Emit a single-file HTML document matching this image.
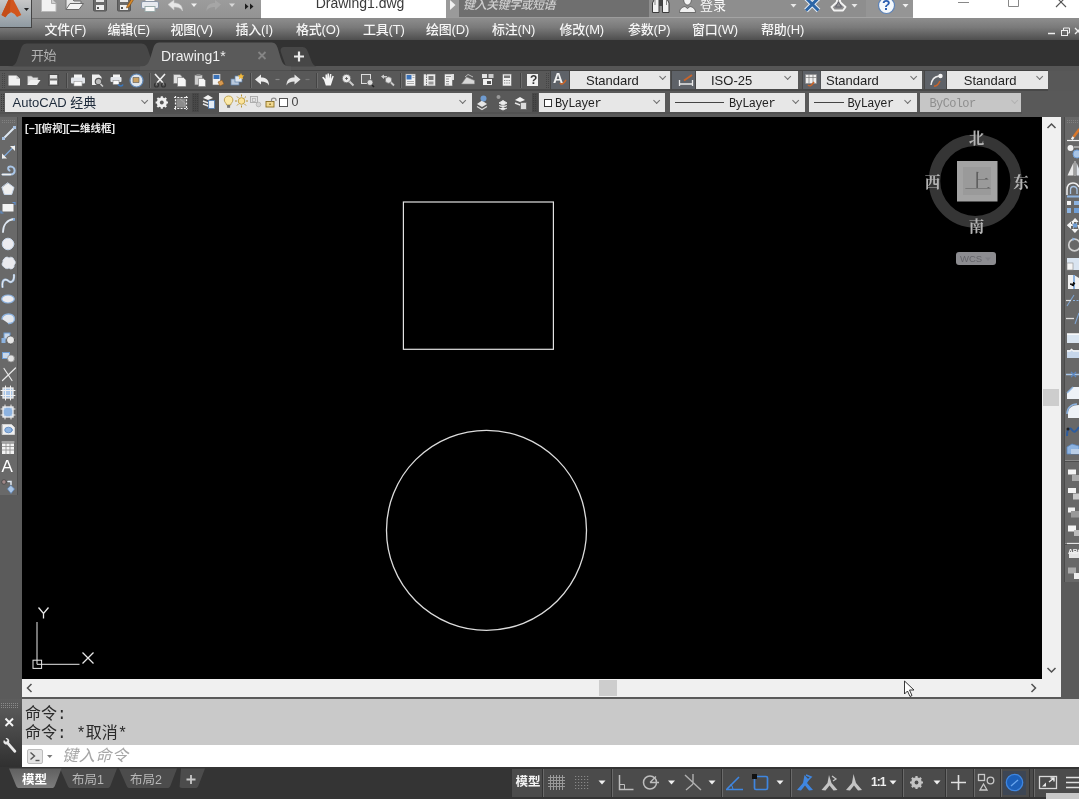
<!DOCTYPE html>
<html lang="zh-CN">
<head>
<meta charset="utf-8">
<title>Drawing1.dwg</title>
<style>
html,body{margin:0;padding:0;}
body{width:1079px;height:799px;overflow:hidden;position:relative;will-change:transform;background:#595959;font-family:"Liberation Sans","Noto Sans CJK SC",sans-serif;font-size:13px;color:#f0f0f0;}
.abs{position:absolute;}
div,span,i{box-sizing:border-box;}
/* title bar */
#title{left:0;top:0;width:1079px;height:19px;background:#8c8c8c;}
#qat{left:0;top:0;width:261px;height:19px;background:linear-gradient(#9c9c9c,#939393);border-bottom:1px solid #6e6e6e;}
#doctitle{left:261px;top:0;width:185px;height:18px;background:#fff;color:#333;font-size:14px;line-height:14px;text-align:center;}
#search{left:446px;top:0;width:203px;height:18px;background:#6f6f6f;border-bottom:1px solid #9c9c9c;}
#info{left:649px;top:0;width:264px;height:18px;background:#8e8e8e;border-bottom:1px solid #a4a4a4;overflow:hidden}
#winctl{left:913px;top:0;width:166px;height:18px;background:#fff;}
#appbtn{left:0;top:0;width:32px;height:28px;background:linear-gradient(#c8c8c8,#8f9aa2);border-right:1px solid #444;border-bottom:1px solid #444;}
/* menu */
#menu{left:0;top:19px;width:1079px;height:21px;background:linear-gradient(#8c8c8c,#7a7a7a 40%,#4e4e4e);}
#menu span{position:absolute;top:1px;font-size:13px;line-height:20px;color:#f6f6f6;white-space:nowrap;font-weight:500;letter-spacing:-.2px}
/* tabs */
#tabs{left:0;top:40px;width:1079px;height:31px;background:#323232;}
/* toolbars */
#tb1{left:0;top:71px;width:1079px;height:20px;background:#585858;}
#tb2{left:0;top:91px;width:1079px;height:26px;background:#595959;}
.combo{position:absolute;background:#e7e7e7;color:#222;height:19px;font-size:13px;line-height:19px;white-space:nowrap;overflow:hidden;}
.chev{position:absolute;top:4.650px;width:5.300px;height:5.300px;border-right:1.200px solid #707070;border-bottom:1.200px solid #707070;transform:rotate(45deg);transform-origin:50% 50%;}
#tb1 .chev{top:3.350px;}
#tb1 .combo span{margin-top:1px;}
.mono{font-family:"Liberation Mono","DejaVu Sans Mono",monospace;font-size:12px;letter-spacing:-.63px;margin-top:1.500px;}
/* main */
#ltb{left:0;top:116px;width:22px;height:583px;background:#5b5b5b;}
#draw{left:22px;top:117px;width:1020px;height:562px;background:#000;}
#vscroll{left:1042px;top:117px;width:19px;height:580px;background:#f0f0f0;}
#hscroll{left:22px;top:679px;width:1020px;height:18px;background:#f0f0f0;}
#rtb{left:1061px;top:116px;width:18px;height:583px;background:#5a5a5a;}
/* command */
#cmdhandle{left:0;top:699px;width:22px;height:68px;background:linear-gradient(#5e5e5e,#303030);}
#cmdhist{left:22px;top:699px;width:1057px;height:46px;background:#c9c9c9;color:#222;}
#cmdin{left:22px;top:745px;width:1057px;height:22px;background:#fff;}
.cmdtxt{font-family:"Liberation Mono","Noto Sans CJK SC",monospace;font-size:16px;line-height:20px;color:#2a2a2a;white-space:pre;letter-spacing:0}
.cmdtxt b{font-weight:normal;font-size:16px;letter-spacing:0}
/* status */
#status{left:0;top:767px;width:1079px;height:32px;background:#343434;}
</style>
</head>
<body>
<div id="title" class="abs"></div>
<div id="qat" class="abs">
<svg width="263" height="18" style="position:absolute;left:0;top:0">
<!-- new -->
<path d="M41.5 -1h10l4.5 4.500V11.500h-14.500z" fill="#f2f2f2" stroke="#b8b8b8"/>
<path d="M51.500 -1v4.500h4.500" fill="#d0d0d0" stroke="#aaa"/>
<!-- open -->
<path d="M66 9.500V-1h6l2 2h7v3" fill="#e8e8e8" stroke="#707070"/>
<path d="M66 9.500l4-6h13.500l-4.500 6z" fill="#f4f4f4" stroke="#6a6a6a"/>
<!-- save -->
<rect x="93.500" y="-2" width="13" height="13" rx="1" fill="#6a6a6a" stroke="#555"/>
<rect x="96" y="-2" width="8" height="4" fill="#e8e8e8"/>
<rect x="96" y="5" width="8" height="5" fill="#f0f0f0"/>
<rect x="97" y="7" width="2" height="2" fill="#555"/>
<!-- save as -->
<rect x="117.500" y="-2" width="13" height="13" rx="1" fill="#6a6a6a" stroke="#555"/>
<rect x="120" y="-2" width="8" height="4" fill="#e8e8e8"/>
<rect x="120" y="5" width="8" height="5" fill="#f0f0f0"/>
<rect x="121" y="7" width="2" height="2" fill="#555"/>
<path d="M127 6l5-8 2 1-5 8-2.500 1z" fill="#d98a2b" stroke="#7a4a10" stroke-width=".6"/>
<!-- print -->
<rect x="145" y="-2" width="10" height="5" fill="#f4f4f4" stroke="#999"/>
<rect x="141.500" y="1.500" width="17" height="7" rx="1.500" fill="#e6e9ee" stroke="#8a95a5"/>
<rect x="145" y="6.500" width="10" height="5" fill="#fafafa" stroke="#9aa"/>
<!-- undo -->
<path d="M168 4.500l6-4.500v3c5 0 8.500 2 8.500 8-1.500-3-4-4-8.500-4v3z" fill="#e6e6e6" stroke="#c8c8c8" stroke-width=".6"/>
<path d="M191 3.500h6l-3 3.500z" fill="#f0f0f0"/>
<!-- redo (dim) -->
<path d="M221 4.500l-6-4.500v3c-5 0-8.500 2-8.500 8 1.500-3 4-4 8.500-4v3z" fill="#a6a6a6"/>
<path d="M229 3.500h6l-3 3.500z" fill="#d8d8d8"/>
<!-- more -->
<path d="M245 3.500l3.500 3-3.500 3zM250 3.500l3.500 3-3.500 3z" fill="#1c1c1c"/>
</svg>
</div>
<div id="doctitle" class="abs"><span style="position:absolute;left:2px;width:183px;top:-5px;text-align:center;font-size:14px;line-height:16px;color:#3a3a3a;padding-left:11px">Drawing1.dwg</span></div>
<div id="search" class="abs">
<div class="abs" style="left:0;top:0;width:13px;height:17px;background:#9a9a9a"></div>
<svg width="12" height="18" style="position:absolute;left:0;top:0"><path d="M4 0l5.500 5-5.500 5z" fill="#f2f2f2"/></svg>
<span style="position:absolute;left:17px;top:-3px;font-size:12px;line-height:16px;font-style:italic;font-weight:500;color:#cfcfcf;white-space:nowrap;letter-spacing:-.5px">键入关键字或短语</span>
</div>
<div id="info" class="abs">
<svg width="264" height="18" style="position:absolute;left:0;top:0">
<!-- binoculars -->
<path d="M3.500 12.500V3l2-4h4.500v13.500zM13.500 12.500V-1h4.500l2 4v9.500z" fill="#f4f4f4" stroke="#3c3c3c" stroke-width="1"/>
<rect x="10" y="0" width="3.500" height="6" fill="#444"/><path d="M6 -1v6M17.500 -1v6" stroke="#888" stroke-width="1"/>
<!-- person -->
<path d="M34.500 -2c0 5 2 7 4 7s4-2 4-7z" fill="#f4f4f4" stroke="#555" stroke-width=".8"/>
<path d="M30.500 12.500c0-4 3-5.500 5.500-6l2.500 2 2.500-2c2.500.5 5.500 2 5.500 6z" fill="#f0f0f0" stroke="#555" stroke-width=".8"/>
<path d="M141.500 4h6l-3 3.500z" fill="#e8e8e8"/>
<!-- exchange X -->
<path d="M157 -2l12.500 12.500M169.500 -2l-12.500 12.500" stroke="#e4ecf6" stroke-width="5" fill="none"/>
<path d="M157 -2l12.500 12.500M169.500 -2l-12.500 12.500" stroke="#2c65a6" stroke-width="3" fill="none"/>
<!-- A360 -->
<path d="M189.500 -4l-2 6.500-5 4.500 2.500 3.500h9l2.500-3.500-5-4.500-2-6.500z" fill="none" stroke="#f2f2f2" stroke-width="1.900" stroke-linejoin="round"/>
<path d="M189.500 2l-3 5h6z" fill="none" stroke="#5a5a6a" stroke-width=".8"/>
<path d="M202.500 4h6l-3 3.500z" fill="#e8e8e8"/>
<!-- help -->
<rect x="217" y="-4" width="48" height="22" fill="#959595"/>
<circle cx="237.500" cy="5.500" r="8" fill="#f4f8fc" stroke="#5d83b8" stroke-width="1.200"/>
<path d="M253.500 4h6l-3 3.500z" fill="#f0f0f0"/>
</svg>
<span style="position:absolute;left:51px;top:-2px;font-size:13px;line-height:16px;color:#fafafa;white-space:nowrap">登录</span>
<span style="position:absolute;left:233px;top:-3px;font-size:14px;font-weight:bold;line-height:16px;color:#2a5db0">?</span>
</div>
<div id="winctl" class="abs">
<svg width="166" height="18" style="position:absolute;left:0;top:0">
<path d="M45 2.500h11" stroke="#888" stroke-width="1"/>
<path d="M95.500 -2v8.500h10v-8.500" fill="none" stroke="#888" stroke-width="1"/>
<path d="M143 -3l10 10M153 -3l-10 10" stroke="#555" stroke-width="1.100"/>
</svg></div>
<div id="menu" class="abs"><span style="left:44.5px">文件(F)</span><span style="left:107.5px">编辑(E)</span><span style="left:170.5px">视图(V)</span><span style="left:235.5px">插入(I)</span><span style="left:296px">格式(O)</span><span style="left:363px">工具(T)</span><span style="left:426px">绘图(D)</span><span style="left:492px">标注(N)</span><span style="left:559.5px">修改(M)</span><span style="left:628px">参数(P)</span><span style="left:692px">窗口(W)</span><span style="left:761px">帮助(H)</span><svg width="34" height="22" style="position:absolute;left:1045px;top:0">
<path d="M3 14.500h7" stroke="#eee" stroke-width="1.500"/>
<rect x="16.500" y="11.500" width="6" height="5" fill="none" stroke="#eee"/><path d="M18.500 11v-2h6v5h-2" fill="none" stroke="#eee"/>
<path d="M30 9l6 6M36 9l-6 6" stroke="#eee" stroke-width="1.300"/></svg></div>
<div id="appbtn" class="abs">
<svg width="31" height="27" style="position:absolute;left:0;top:0">
<path d="M8.800 -1h4.200l8.300 16-4.300 2-2.500-3-3.300-1.800-3.300 1.800-2.500 3.300-3.900-2.300z" fill="#d2561d"/>
<path d="M8.800 -1l-7.300 16 3.900 2.300 2.500-3.300 1.700-1 1.200-14z" fill="#c44d18"/>
<path d="M5 20l3-3.500 3.500-2 3.500 2 3 3.500" fill="none" stroke="#8fb0cc" stroke-width="1.500" opacity=".5"/>
<path d="M24 8h5l-2.500 3z" fill="#222"/>
</svg></div>
<div id="tabs" class="abs">
<svg width="1079" height="31" style="position:absolute;left:0;top:0">
<rect x="0" y="26" width="1079" height="5" fill="#565656"/>
<rect x="0" y="30" width="1048" height="1" fill="#424242"/>
<path d="M8 26.500c7 0 8-3 10-9l3-9c1.500-4 3-5 7-5h112c4 0 6 1 7.500 5l3 9c2 6 3 9 10 9z" fill="#474747"/>
<path d="M286 26.500l-5-14c-1-3.500 0-5.500 4-5.500h16c4 0 5.500 1 7 5l3 8c1.500 4 3 6.500 7 6.500z" fill="#474747"/>
<path d="M140 30.500v-4c7 0 8.500-3 10.500-9l3-10c1.500-4 3-5 7-5h110c4 0 5.500 1 7 5l3 10c2 6 3.500 9 10.500 9v4z" fill="#5a5a5a"/>
<path d="M258.500 12l7 7M265.500 12l-7 7" stroke="#858585" stroke-width="1.800"/>
<path d="M294 16.500h10M299 11.500v10" stroke="#ececec" stroke-width="2.200"/>
</svg>
<span style="position:absolute;left:31px;top:8px;font-size:13px;line-height:16px;color:#b2b2b2;letter-spacing:-.5px">开始</span>
<span style="position:absolute;left:161px;top:7px;font-size:14px;line-height:18px;color:#f0f0f0;">Drawing1*</span>
</div>
<div id="tb1" class="abs">
<svg width="1079" height="20" style="position:absolute;left:0;top:0">
<rect x="0" y="18" width="1048" height="2" fill="#484848"/>
<g stroke="#444" stroke-width="1"><path d="M2.500 2v15M4.500 2v15" stroke-dasharray="1 1"/><path d="M66.500 2v15M149.500 2v15M250.500 2v15M316.500 2v15M400.500 2v15M520.500 2v15"/></g>
<g stroke="#6c6c6c" stroke-width="1"><path d="M67.500 2v15M150.500 2v15M251.500 2v15M317.500 2v15M401.500 2v15M521.500 2v15"/></g>
<!-- new -->
<path d="M8.500 4.500h8l3.500 3.500v6.500h-11.500z" fill="#f0f0f0"/><path d="M16.500 4.500v3.500h3.500" fill="#c8c8c8"/>
<!-- open -->
<path d="M27.500 14v-9h4l1.500 1.500h5v2.500" fill="#dcdcdc" stroke="#8a8a8a" stroke-width=".7"/><path d="M27.500 14l3-5h10l-3.500 5z" fill="#f0f0f0"/>
<!-- save -->
<rect x="48.500" y="3.500" width="10" height="11" fill="#6c6c6c" stroke="#4c4c4c"/><rect x="50" y="4" width="7" height="3.500" fill="#e6e6e6"/><rect x="50" y="9.500" width="7" height="4" fill="#f2f2f2"/>
<!-- print -->
<rect x="74" y="3.500" width="8" height="4" fill="#f4f4f4"/><rect x="71" y="6.500" width="14" height="6" rx="1" fill="#e2e5ea"/><rect x="74" y="10.500" width="8" height="4.500" fill="#fbfbfb" stroke="#999" stroke-width=".6"/>
<!-- preview -->
<path d="M92 3.500h7l2.500 2.500v8h-9.500z" fill="#eee"/><circle cx="98.500" cy="10.500" r="3.200" fill="#bbb" stroke="#555" stroke-width="1.200"/><path d="M100.500 13l2.500 2.500" stroke="#ccc" stroke-width="1.500"/>
<!-- publish -->
<rect x="113" y="3.500" width="7" height="3.500" fill="#f4f4f4"/><rect x="110.500" y="6" width="11" height="5" rx="1" fill="#e2e5ea"/><rect x="113" y="9.500" width="6" height="4" fill="#fbfbfb" stroke="#888" stroke-width=".6"/><path d="M118 13.500c2 2 4 2 5 0" stroke="#3a78c0" stroke-width="1.600" fill="none"/>
<!-- 3dprint -->
<circle cx="136.500" cy="9.500" r="6.500" fill="#dfe6ee" stroke="#5f88b8" stroke-width="1.200"/><path d="M133 6.500h6v5h-6z" fill="#c9a063" stroke="#555" stroke-width=".6"/>
<!-- cut -->
<path d="M155 3l9 10M165 3l-9 10" stroke="#f0f0f0" stroke-width="1.600"/><circle cx="156.500" cy="14" r="2" fill="none" stroke="#333" stroke-width="1.200"/><circle cx="163.500" cy="14" r="2" fill="none" stroke="#333" stroke-width="1.200"/>
<!-- copy -->
<path d="M173.500 3.500h6.500l2 2v7h-8.500z" fill="#e0e0e0" stroke="#777" stroke-width=".6"/><path d="M177.500 6.500h6l2.500 2.500v6.500h-8.500z" fill="#f6f6f6" stroke="#777" stroke-width=".6"/>
<!-- paste -->
<rect x="194.500" y="4" width="8" height="10" fill="#cfcfcf" stroke="#666" stroke-width=".7"/><rect x="196.500" y="3" width="4" height="2" fill="#888"/><path d="M198.500 7.500h5l2 2v6h-7z" fill="#f6f6f6" stroke="#777" stroke-width=".6"/>
<!-- matchprop -->
<rect x="212.500" y="3" width="8" height="11" fill="#f2f2f2" stroke="#666" stroke-width=".6"/><rect x="213.500" y="4" width="6" height="4" fill="#3b73b9"/><path d="M218 11l4-2 2 4-4 2z" fill="#d79a52" stroke="#7a4a10" stroke-width=".5"/>
<!-- block editor -->
<rect x="231" y="8" width="8" height="6" fill="#b9c9dd" stroke="#5c7fa8" stroke-width=".7"/><rect x="235" y="5" width="7" height="6" fill="#dfe6ee" stroke="#5c7fa8" stroke-width=".7"/><path d="M241 2l1 2.200 2.300.200-1.700 1.600.5 2.300-2.100-1.200-2.100 1.200.5-2.300-1.700-1.600 2.300-.2z" fill="#f1b83a"/>
<!-- undo -->
<path d="M255 8.500l6-5v3c4 0 8 1.500 8 8-1.500-3-4-4-8-4v3z" fill="#ececec"/><path d="M275.500 8.500h4" stroke="#888" stroke-width="1.200"/>
<!-- redo -->
<path d="M300.500 8.500l-6-5v3c-4 0-8 1.500-8 8 1.500-3 4-4 8-4v3z" fill="#e4e4e4"/><path d="M305.500 8.500h4" stroke="#777" stroke-width="1.200"/>
<!-- pan -->
<path d="M324 9l-2-2.500 1.500-.8 2 2.300v-4.500h1.500v4l.5-5h1.500v5l1-4.500h1.400l-.4 5 1.500-3.300 1.300.5-2 6.300-1 3h-5z" fill="#f4f4f4"/>
<!-- zoom realtime -->
<circle cx="346.500" cy="7.500" r="4.200" fill="#e8e8e8" stroke="#777" stroke-width="1"/><path d="M345 7.500h3M346.500 6v3" stroke="#555" stroke-width=".8"/><path d="M349.500 10.500l4 4" stroke="#ccc" stroke-width="2"/>
<!-- zoom window -->
<rect x="361.500" y="3.500" width="9" height="9" fill="#666" stroke="#ddd" stroke-width="1"/><circle cx="370" cy="11.500" r="3" fill="#ddd" stroke="#555" stroke-width=".8"/><path d="M372 14l2 2" stroke="#222" stroke-width="1.600"/>
<!-- zoom prev -->
<path d="M381 5.500l3-2v1.500h3v1.500h-3v1.500z" fill="#ccc"/><circle cx="388.500" cy="9" r="3.200" fill="#e4e4e4" stroke="#777" stroke-width=".8"/><path d="M391 11.500l3 3" stroke="#ccc" stroke-width="1.800"/>
<!-- properties -->
<rect x="405.500" y="3" width="10" height="12" fill="#f2f2f2" stroke="#777" stroke-width=".6"/><rect x="406.500" y="4" width="5" height="4.500" fill="#3b73b9"/><path d="M412.500 4.500h2M412.500 6.500h2M407 10.500h7M407 12.500h7" stroke="#999" stroke-width=".8"/>
<!-- designcenter -->
<rect x="423.500" y="3" width="12" height="12" fill="#eaeaea" stroke="#666" stroke-width=".6"/><path d="M426.500 3v12" stroke="#555" stroke-width=".8" stroke-dasharray="1.500 1"/><rect x="428.500" y="5" width="5" height="4" fill="#777"/><rect x="428.500" y="10.500" width="5" height="3" fill="#999"/>
<!-- toolpalette -->
<rect x="444.500" y="3" width="8" height="12" fill="#f0f0f0" stroke="#666" stroke-width=".6"/><path d="M446 5.500h5M446 8h3M446 10.500h3M446 13h3" stroke="#777" stroke-width=".8"/><rect x="451.500" y="3" width="2.500" height="6" fill="#ddd"/>
<!-- sheetset -->
<path d="M461.500 13l5-7 8 3.500v3.500z" fill="#d8d8d8" stroke="#888" stroke-width=".6"/><path d="M465 6l3-2.500 5 2.500" fill="none" stroke="#bbb" stroke-width="1"/>
<!-- markup -->
<rect x="483" y="8" width="9" height="6" fill="#f2f2f2"/><rect x="482" y="3" width="5" height="4" fill="#e2e2e2"/><rect x="488.500" y="3" width="5" height="4" fill="#ccc"/><path d="M487 10h4v3h-4z" fill="#555"/>
<!-- calc -->
<rect x="502.500" y="3" width="9" height="12" fill="#f0f0f0" stroke="#666" stroke-width=".6"/><rect x="504" y="4.500" width="6" height="2.500" fill="#777"/><path d="M504 9.500h6M504 12h6" stroke="#888" stroke-width="1.200" stroke-dasharray="1.300 1"/>
<!-- help -->
<rect x="527" y="3" width="11" height="12" fill="#f2f2f2"/>
<!-- style icons -->
<path d="M546.500 2v15M548.500 2v15" stroke="#444" stroke-dasharray="1 1"/>
<g fill="#5e6268" stroke="#474747" stroke-width="1"><rect x="550.500" y="-.5" width="19" height="19"/><rect x="671.500" y="-.5" width="24" height="19"/><rect x="802.500" y="-.5" width="18.500" height="19"/><rect x="924.500" y="-.5" width="22" height="19"/></g>
<path d="M560 12c1.500 2 3.500 1 6-3" stroke="#c8642a" stroke-width="1.600" fill="none"/>
<path d="M679.500 9v6M692.500 9v6M679.500 13h13" stroke="#e8e8e8" stroke-width="1.300" fill="none"/><path d="M684 9.500l8-5.500" stroke="#c8642a" stroke-width="1.800"/>
<rect x="805.500" y="3.500" width="11" height="9" fill="#f0f0f0" stroke="#888" stroke-width=".6"/><path d="M805.500 6.500h11M809 3.500v9M813 3.500v9" stroke="#777" stroke-width=".7"/><path d="M808 14c2 2 4 0 6-3" stroke="#c8642a" stroke-width="1.600" fill="none"/>
<path d="M931 14c1-6 3-8 8-9" stroke="#ececec" stroke-width="1.500" fill="none"/><circle cx="940.500" cy="5" r="2.200" fill="#f4f4f4"/><path d="M934 15c2 .5 4-1 6-5" stroke="#c8642a" stroke-width="1.600" fill="none"/>
</svg>
<span class="abs" style="left:530px;top:1px;font-size:12px;font-weight:bold;line-height:16px;color:#333">?</span>
<span class="abs" style="left:553px;top:-1px;font-size:14px;font-weight:bold;line-height:16px;color:#f2f2f2">A</span>
<div class="combo" style="left:570px;top:0;width:99.500px;height:18px;line-height:18px;"><span class="abs" style="left:16px;top:0">Standard</span><i class="chev" style="left:89.650px"></i></div>
<div class="combo" style="left:695.500px;top:0;width:102px;height:18px;line-height:18px;"><span class="abs" style="left:15.500px;top:0">ISO-25</span><i class="chev" style="left:89.650px"></i></div>
<div class="combo" style="left:821px;top:0;width:101px;height:18px;line-height:18px;"><span class="abs" style="left:5px;top:0">Standard</span><i class="chev" style="left:89.650px"></i></div>
<div class="combo" style="left:947px;top:0;width:100.500px;height:18px;line-height:18px;"><span class="abs" style="left:16.750px;top:0">Standard</span><i class="chev" style="left:89.650px"></i></div>
</div>
<div id="tb2" class="abs">
<svg width="1079" height="26" style="position:absolute;left:0;top:0">
<rect x="0" y="21.500" width="1022" height="1" fill="#4c4c4c"/>
<rect x="152.500" y="2" width="66.500" height="19" fill="#515151"/><rect x="192" y="2" width="7" height="19" fill="#484848"/><rect x="532" y="2" width="6" height="19" fill="#484848"/><path d="M1.500 3v18M3.500 3v18M193.500 3v18M195.500 3v18M197.500 3v18M533.500 3v18M535.500 3v18" stroke="#3c3c3c" stroke-dasharray="1 1"/>
<!-- gear -->
<g transform="translate(161.800 11.500) scale(.88)"><circle r="4.300" fill="none" stroke="#f0f0f0" stroke-width="3"/><g stroke="#f0f0f0" stroke-width="2.400"><path d="M0 -7v14M-7 0h14M-5 -5l10 10M5 -5l-10 10"/></g><circle r="2.200" fill="#585858"/></g>
<!-- workspace -->
<rect x="176.500" y="7.500" width="9" height="9" fill="#8c8c8c"/><path d="M174 6.500h14M174 17.500h14M175.500 5v14M186.500 5v14" stroke="#f0f0f0" stroke-width="1.200" stroke-dasharray="2 1.300"/><path d="M180 8l5 4v4" stroke="#aaa" fill="none" stroke-width=".8"/>
<!-- layer props -->
<path d="M203 7l5-3 5 3-5 2z" fill="#f2f2f2"/><path d="M203 10l5 2 5-2M203 13l5 2 5-2" fill="none" stroke="#e8e8e8" stroke-width="1.400"/><rect x="208.500" y="9.500" width="6" height="8" fill="#e4ecf5" stroke="#4a78b0" stroke-width=".8"/>
<!-- layer state icons -->
<path d="M477 13l5-3.500 5 3.500-5 3z" fill="#e6e6e6"/><path d="M477 15.500l5 3 5-3" fill="none" stroke="#ddd" stroke-width="1.200"/><circle cx="483.500" cy="7.500" r="3" fill="#6f9bd0"/>
<path d="M499 12l4-2.500 4 2.500-4 2zM499 14.500l4 2 4-2M499 17l4 2 4-2" fill="#eee" stroke="#e4e4e4" stroke-width="1"/><circle cx="498.500" cy="6" r="2" fill="#9a9a9a"/>
<path d="M515 9l5-3 5 3-5 2z" fill="#f2f2f2"/><path d="M515 12l5 2 5-2" fill="none" stroke="#e8e8e8" stroke-width="1.400"/><rect x="520.500" y="11.500" width="6" height="7" fill="#ddd" stroke="#666" stroke-width=".8"/>
</svg>
<div class="combo" style="left:5px;top:2px;width:147.500px;"><span class="abs" style="left:7.500px;top:0;color:#1d2a3a">AutoCAD 经典</span><i class="chev" style="left:136.600px"></i></div>
<div class="combo" style="left:219px;top:2px;width:252.500px;">
<svg width="90" height="19" style="position:absolute;left:0;top:0">
<path d="M9.600 3c-3 0-4.300 2.200-4.300 4 0 2.200 2 3 2.300 5h4c.3-2 2.300-2.800 2.300-5 0-1.800-1.300-4-4.300-4z" fill="#fbe9a8" stroke="#b0903a" stroke-width=".8"/><rect x="8.100" y="12" width="3" height="2.800" fill="#777"/>
<circle cx="22.500" cy="8" r="3.300" fill="#fbe39a" stroke="#b8942e" stroke-width=".8"/><path d="M22.500 1.500v2M22.500 12.500v2M16 8h2M27 8h2M18 3.500l1.400 1.400M25.600 11.100l1.400 1.400M27 3.500l-1.400 1.400M19.400 11.100l-1.400 1.400" stroke="#b8942e" stroke-width="1"/>
<rect x="31.500" y="3.500" width="7" height="6" fill="#e2e2e2" stroke="#a8a8a8" stroke-width=".9"/><rect x="33.500" y="5.500" width="3" height="3" fill="none" stroke="#b0b0b0" stroke-width=".7"/><circle cx="39.500" cy="11.500" r="2.300" fill="#d4d4d4" stroke="#aaa" stroke-width=".7"/>
<rect x="47" y="8.500" width="8" height="5.500" fill="#f0d890" stroke="#8a6f22" stroke-width=".9"/><path d="M52.500 8.500v-1.500c0-2.500 4.500-2.500 4.500 0v1" fill="none" stroke="#8c8c8c" stroke-width="1.200"/><rect x="50.300" y="10.500" width="1.500" height="1.500" fill="#8a6f22"/>
<rect x="60.500" y="5.500" width="8" height="8" fill="#fff" stroke="#555" stroke-width="1"/>
</svg>
<span class="abs" style="left:72.500px;top:0;font-size:12.500px;color:#444">0</span><i class="chev" style="left:241.350px"></i></div>
<div class="combo" style="left:539px;top:2px;width:125.500px;"><span class="abs" style="left:5px;top:6px;width:8px;height:8px;border:1px solid #333;background:#fff"></span><span class="abs mono" style="left:16px;top:0">ByLayer</span><i class="chev" style="left:114.650px"></i></div>
<div class="combo" style="left:670px;top:2px;width:134.500px;"><span class="abs" style="left:5px;top:9px;width:49px;height:1px;background:#444"></span><span class="abs mono" style="left:59px;top:0">ByLayer</span><i class="chev" style="left:123.350px"></i></div>
<div class="combo" style="left:809px;top:2px;width:107.500px;"><span class="abs" style="left:5px;top:9px;width:30px;height:1px;background:#444"></span><span class="abs mono" style="left:38.500px;top:0">ByLayer</span><i class="chev" style="left:95.850px"></i></div>
<div class="combo" style="left:920px;top:2px;width:101px;background:#c6c6c6;color:#8e8e8e"><span class="abs mono" style="left:9.500px;top:0">ByColor</span><i class="chev" style="left:91.600px;border-color:#b2b2b2"></i></div>
</div>
<div id="ltb" class="abs">
<svg width="22" height="583" style="position:absolute;left:0;top:0">
<rect x="0" y="1" width="17.500" height="378" fill="#696969"/><rect x="17" y="1" width="1" height="378" fill="#4e4e4e"/>
<path d="M2 4.500h13M2 6.500h13" stroke="#808080" stroke-dasharray="1 1"/>
<g transform="translate(0 -116)" fill="none" stroke-linecap="round">
<!-- 1 line -->
<path d="M3 139l12-12" stroke="#dfe8f2" stroke-width="1.800"/><rect x="13" y="126" width="3" height="3" fill="#aac4e4" stroke="none"/><rect x="2" y="137" width="3" height="3" fill="#aac4e4" stroke="none"/>
<!-- 2 xline -->
<path d="M2.500 158l12-12" stroke="#7fa8d8" stroke-width="1.300"/><path d="M10 146h5v5zM7 158.500h-5v-5z" fill="#f0f0f0" stroke="none"/>
<!-- 3 pline -->
<path d="M2.500 174.500h8c6 0 5-8 0-8c-3 0-3 3-1 4" stroke="#a9c5e6" stroke-width="2"/><path d="M2.500 174.500h8" stroke="#f0f0f0" stroke-width="1.600"/>
<!-- 4 polygon -->
<path d="M8 183l6 4.500-2.300 7h-7.400l-2.300-7z" fill="#f0f0f0" stroke="#c9d8ea" stroke-width="1"/>
<!-- 5 rect -->
<rect x="2.500" y="204" width="11" height="7.500" fill="#f4f4f4" stroke="none"/><path d="M1 211v2h2M13 202.500h2v2" stroke="#5f8fce" stroke-width="1.200"/>
<!-- 6 arc -->
<path d="M3 232c0-7 4-12 11-13" stroke="#dfe8f2" stroke-width="1.800"/><path d="M14 219v1" stroke="#7fa8d8" stroke-width="2"/>
<!-- 7 circle -->
<circle cx="8" cy="244" r="5.800" fill="#ececf0" stroke="#c9d8ea" stroke-width="1"/>
<!-- 8 revcloud -->
<path d="M4 259a3 3 0 0 1 5-1a3 3 0 0 1 5 2a3 3 0 0 1 0 5a3 3 0 0 1-5 3a3.500 3.500 0 0 1-5-1a3 3 0 0 1-1-5a2.500 2.500 0 0 1 1-3z" fill="#eaeaee" stroke="#cfdbe9" stroke-width=".8"/>
<!-- 9 spline -->
<path d="M2.500 287c-1-9 4-8 6-6s6 1 5.500-6" stroke="#a9c5e6" stroke-width="2.200"/><path d="M2.500 287c-1-9 4-8 6-6s6 1 5.500-6" stroke="#f0f0f0" stroke-width="1"/>
<!-- 10 ellipse -->
<ellipse cx="8" cy="299" rx="6.300" ry="4" fill="#ececf0" stroke="#8db3e0" stroke-width="1.200"/>
<!-- 11 ellipse arc -->
<path d="M2 319c0-3 3-5 6.500-5s6 2 6 5-3 4.500-6 4.500" fill="#e4e8ee" stroke="#8db3e0" stroke-width="1.300"/>
<!-- 12 insert -->
<rect x="4" y="333" width="6" height="6" fill="#c9d8ea" stroke="#6f9ed6" stroke-width="1"/><circle cx="10.500" cy="340" r="4" fill="#e8e8e8" stroke="#444" stroke-width=".7"/><rect x="1.500" y="338" width="4" height="5" fill="#8db3e0" stroke="none"/>
<!-- 13 make block -->
<rect x="2.500" y="352.500" width="7" height="6" fill="#c9d8ea" stroke="#6f9ed6" stroke-width="1"/><circle cx="11" cy="358.500" r="3.500" fill="#e4e4e4" stroke="#888" stroke-width=".7"/>
<!-- 14 point -->
<path d="M2.500 380.500l13-12.500M4 368.500l8 12" stroke="#e8e8e8" stroke-width="1.200"/>
<!-- 15 hatch -->
<rect x="3" y="388" width="10" height="10" fill="#a9c5e6" stroke="#f0f0f0" stroke-width="1.300"/><path d="M1 390.500h14M1 395.500h14M5.500 386v14M10.500 386v14" stroke="#f0f0f0" stroke-width="1"/>
<!-- 16 gradient -->
<rect x="3" y="407" width="10" height="10" fill="#8db3e0" stroke="#f0f0f0" stroke-width="1.300"/><path d="M1 409h3M1 415h3M12 409h3M12 415h3M5 405v3M11 405v3M5 416v3M11 416v3" stroke="#f0f0f0" stroke-width="1"/>
<!-- 17 region -->
<path d="M2.500 424.500h9l3 3v7h-12z" fill="#f0f0f0" stroke="#ddd" stroke-width=".8"/><ellipse cx="8.500" cy="430" rx="3.800" ry="2.800" fill="#8db3e0" stroke="#5a86bf" stroke-width=".8"/>
<!-- 18 table -->
<rect x="2" y="443.500" width="12" height="10.500" fill="#f2f2f2" stroke="none"/><path d="M2 446.500h12M2 450h12M6 443.500v10.500M10 443.500v10.500" stroke="#8a8a8a" stroke-width=".8"/><path d="M2 442h12" stroke="#ddd" stroke-width="1"/>
<!-- 20 add selected -->
<circle cx="4" cy="482" r="2.300" fill="#a08888" stroke="#444" stroke-width=".8"/><path d="M8 481.500h3v3" stroke="#dfe8f2" stroke-width="1.500"/><path d="M11 485.500l3.500 3.500-3.500 4.500-3.500-4.500z" fill="#a9c5e6" stroke="#5a86bf" stroke-width=".7"/>
</g>
</svg>
<span class="abs" style="left:1.500px;top:342px;font-size:17px;line-height:18px;color:#fff;">A</span>
</div>
<div id="draw" class="abs">
<svg width="1020" height="562" viewBox="22 117 1020 562" style="position:absolute;left:0;top:0">
<rect x="403.400" y="202" width="150" height="147.300" fill="none" stroke="#e2e2e2" stroke-width="1.200"/>
<circle cx="486.500" cy="530.300" r="100" fill="none" stroke="#dcdcdc" stroke-width="1.300"/>
<!-- UCS icon -->
<g stroke="#e8e8e8" stroke-width="1" fill="none">
<path d="M37 622V664.300H79.500"/>
<rect x="33" y="660.200" width="8.600" height="8.200"/>
<path d="M38.5 607.5L43.5 613.5L48.5 607.5M43.5 613.5V618.5" stroke-width="1.3"/>
<path d="M82.5 652.5L93.5 663.5M93.5 652.5L82.5 663.5" stroke-width="1.3"/>
</g>
<!-- viewcube -->
<circle cx="975.3" cy="181" r="40.8" fill="none" stroke="#353535" stroke-width="11.5"/>
<rect x="957" y="161" width="40.5" height="40.5" fill="#a3a3a3"/>
<rect x="963" y="167" width="28" height="28" fill="#9a9a9a"/>
<g font-family="'Liberation Serif','Noto Serif CJK SC',serif" font-weight="bold" font-size="15.500" fill="#b4b4b4" text-anchor="middle">
<text x="976.400" y="143.500">北</text>
<text x="976.400" y="232.300">南</text>
<text x="932.5" y="188">西</text>
<text x="1021" y="188">东</text>
</g>
<text transform="translate(978 187.700) scale(1.400 .95)" x="0" y="0" font-family="'Liberation Serif','Noto Serif CJK SC',serif" font-weight="300" font-size="20" fill="#5c5c5c" text-anchor="middle">上</text>
<rect x="956" y="252" width="40" height="13" rx="3" fill="#8c8c90"/>
<text x="960" y="262" font-family="'Liberation Sans',sans-serif" font-size="9.5" fill="#65656a">WCS</text>
<path d="M985 257.5h6l-3 3.5z" fill="#808086"/>
</svg>
<div class="abs" id="vplabel" style="left:3px;top:4.500px;font-size:10.500px;line-height:13px;color:#e8e8e8;letter-spacing:0;white-space:nowrap;font-weight:bold;">[−][俯视][二维线框]</div>
</div>
<div id="vscroll" class="abs">
<svg width="19" height="580" style="position:absolute;left:0;top:0">
<path d="M5.500 11l4-4 4 4" fill="none" stroke="#505050" stroke-width="1.500"/>
<path d="M5.500 551l4 4 4-4" fill="none" stroke="#505050" stroke-width="1.500"/>
<rect x="1" y="272" width="16" height="17" fill="#cdcdcd"/>
</svg></div>
<div id="hscroll" class="abs">
<svg width="1020" height="18" style="position:absolute;left:0;top:0">
<path d="M9.500 5l-4 4 4 4" fill="none" stroke="#505050" stroke-width="1.500"/>
<path d="M1009.500 5l4 4-4 4" fill="none" stroke="#505050" stroke-width="1.500"/>
<rect x="577" y="1" width="18" height="16" fill="#cdcdcd"/>
<path d="M882.500 2v13l3-3 2.500 5.500 2-1-2.500-5.500h4.500z" fill="#fff" stroke="#222" stroke-width=".9"/>
</svg></div>
<div id="rtb" class="abs">
<svg width="18" height="583" style="position:absolute;left:0;top:0">
<rect x="3.500" y="1" width="15" height="465" fill="#686868"/><rect x="3" y="1" width="1" height="465" fill="#4a4a4a"/>
<path d="M6 4.500h12M6 6.500h12" stroke="#808080" stroke-dasharray="1 1"/>
<path d="M4 344.500h14M4 427.500h14" stroke="#8a8a8a"/><path d="M4 345.500h14M4 428.500h14" stroke="#4e4e4e"/>
<g transform="translate(-1061 -116)" fill="none">
<!-- erase -->
<path d="M1073.500 137l6-8" stroke="#d9772b" stroke-width="2.600"/><path d="M1071.800 139.300l1.700-2.300" stroke="#f4f4f4" stroke-width="2.200"/><path d="M1067 140.500h12" stroke="#f0f0f0" stroke-width="1.200"/>
<!-- copy -->
<circle cx="1070.500" cy="148" r="3" fill="#f0f0f0"/><circle cx="1077" cy="154" r="4" fill="#a9c5e6" stroke="#6f9ed6"/><path d="M1074 147h5" stroke="#ddd"/>
<!-- mirror -->
<path d="M1067.500 175.500l6-13v13z" fill="#e8e8e8"/><path d="M1075 161v15" stroke="#d8d8d8"/><path d="M1076.500 162.500l2.500 6v7h-2.500z" fill="#dfe4ea"/>
<!-- offset -->
<path d="M1067 195v-5c0-4 2-7 6-7s5 2 6 4" stroke="#f0f0f0" stroke-width="1.500"/><path d="M1067 196.500h12" stroke="#8db3e0" stroke-width="2"/><path d="M1070.500 194v-4c0-2 1-3.500 3-3.500s3 1 3.500 2.500v5" stroke="#a9c5e6" stroke-width="1.300"/>
<!-- array -->
<rect x="1067" y="201" width="4" height="4" fill="#f4f4f4"/><rect x="1074" y="201" width="5" height="4" fill="#8db3e0"/><rect x="1067" y="208" width="4" height="5" fill="#8db3e0"/><rect x="1074" y="208" width="5" height="5" fill="#6f9ed6"/>
<!-- move -->
<path d="M1075 218l3.500 4h-2.500v3h3v-2.500l0 8M1075 233l-3.500-4h2.500v-3h-3v2.500l-4-3.500 4-3.500v2.500h3v-3h-2.500z" fill="#f2f2f2" stroke="none"/><rect x="1073" y="223.500" width="4" height="4" fill="#6f9ed6"/><path d="M1075 218l3.500 4h-7zM1075 233l3.500-4h-7zM1067 225.500l4-3.500v7z" fill="#f2f2f2"/>
<!-- rotate -->
<circle cx="1074.500" cy="245" r="5.800" stroke="#cfcfcf" stroke-width="1.700"/><path d="M1072.500 237.500l3 1.500-3 2z" fill="#8db3e0"/>
<!-- scale -->
<rect x="1067" y="258" width="12" height="12" fill="#d9e4f0"/><rect x="1067" y="263" width="6" height="7" fill="#f4f4f4" stroke="#888" stroke-width=".6"/>
<!-- stretch -->
<path d="M1068 275h6l5 3v11h-11z" fill="#f0f0f0"/><path d="M1074 275v14" stroke="#8db3e0" stroke-width="2"/><path d="M1070 284h5l-1.500-2v4z" fill="#111" stroke="#111"/>
<!-- trim -->
<path d="M1067 306l7-11" stroke="#7fa5d2" stroke-width="1.100"/><path d="M1066 300.500h5" stroke="#e0e0e0" stroke-width="1.200"/><path d="M1073 300.500h6" stroke="#8db3e0" stroke-width="1" stroke-dasharray="2 1.500"/>
<!-- extend -->
<path d="M1066 318.500h8" stroke="#dcdcdc" stroke-width="1.300"/><path d="M1079 313l-4 11" stroke="#7fa5d2" stroke-width="1.100"/>
<!-- break at pt -->
<rect x="1067" y="334" width="12" height="9" fill="#d9e4f0"/><path d="M1067 334h12" stroke="#fff" stroke-width="1.500"/>
<!-- break -->
<path d="M1067 350h12v8h-12z" fill="#c6d6ea"/><path d="M1067 351h3l1.500-1.500 2 1.500h5.500" stroke="#f4f4f4" stroke-width="1.500"/>
<!-- join -->
<path d="M1066 374.500h13" stroke="#a9c5e6" stroke-width="1.500"/><path d="M1071 372l5 5M1076 372l-5 5" stroke="#5a86bf" stroke-width="1.300"/>
<!-- chamfer -->
<path d="M1067 399v-6l6-6h6v12z" fill="#eef2f7"/><path d="M1067 393l6-6" stroke="#8db3e0" stroke-width="1.500"/>
<!-- fillet -->
<path d="M1068 418v-5c0-5 4-8 11-8v13z" fill="#eef2f7"/><path d="M1067 414c0-6 4-10 10-10" stroke="#8db3e0" stroke-width="1.500"/>
<!-- blend -->
<path d="M1067 436c0-8 3-9 5-6s4 2 7-3" stroke="#2d5c9e" stroke-width="2"/><circle cx="1068" cy="429" r="1.500" fill="#222"/>
<!-- explode -->
<path d="M1067 447l5-3 7 2v8h-12z" fill="#8db3e0" stroke="#5a86bf" stroke-width=".8"/><path d="M1071 449h8v5h-8z" fill="#b9cde6"/>
<!-- draworder -->
<rect x="1068" y="469.500" width="8" height="5" fill="#f4f4f4"/><rect x="1072" y="475" width="7" height="6" fill="#aaa"/>
<rect x="1068" y="488" width="8" height="5" fill="#f4f4f4"/><rect x="1073" y="493.500" width="6" height="6" fill="#c8c8c8"/>
<rect x="1068" y="507.500" width="7" height="5" fill="#f0f0f0"/><rect x="1071" y="511" width="8" height="6.500" fill="#999"/>
<rect x="1068" y="525.500" width="8" height="6" fill="#f4f4f4"/><rect x="1074" y="530" width="5" height="6" fill="#bbb"/>
<path d="M1067 543.500h12" stroke="#e4e4e4" stroke-width="1.300"/>
<rect x="1069" y="552" width="10" height="6" fill="#e4e4e4"/>
<rect x="1068" y="567.500" width="8" height="6" fill="#aaa"/><rect x="1074" y="573" width="5" height="6" fill="#eee"/>
</g>
</svg>
<span class="abs" style="left:7px;top:432px;font-size:7px;line-height:8px;color:#f0f0f0;font-weight:bold;letter-spacing:-.3px">ABC</span>
</div>
<div id="cmdhandle" class="abs">
<svg width="22" height="68" style="position:absolute;left:0;top:0">
<path d="M1 4.500h18M1 6.500h18M1 8.500h18" stroke="#8a8a8a" stroke-width="1" stroke-dasharray="1 1"/>
<path d="M5.500 19.500l7.500 7.500M13 19.500l-7.500 7.500" stroke="#f4f4f4" stroke-width="2"/>
<path transform="translate(-1 3.500)" d="M5 37.500c-1.500 2 0 5 3 4.500l7 8c1 1 3-.5 2-2l-7-8c1-2.500-1-5-3.500-4.500l2 2.500-1.500 1.500z" fill="#e8e8e8"/>
</svg></div>
<div id="cmdhist" class="abs"><div class="abs cmdtxt" style="left:3px;top:6px">命令<b>: </b></div><div class="abs cmdtxt" style="left:3px;top:25px">命令<b>: *</b>取消<b>*</b></div></div>
<div id="cmdin" class="abs">
<svg width="40" height="22" style="position:absolute;left:1px;top:0">
<rect x="4.500" y="4.500" width="15" height="14" rx="1.500" fill="#e4e4e4" stroke="#bcbcbc"/>
<path d="M7.500 7.500l4 3.500-4 3.500" fill="none" stroke="#555" stroke-width="1.400"/><path d="M12.500 15.500h4" stroke="#555" stroke-width="1.400"/>
<path d="M24 10h5.500l-2.750 3z" fill="#7a7a7a"/>
</svg>
<span class="abs" style="left:40px;top:1px;font-size:16px;line-height:20px;font-style:italic;color:#a6a6a6;letter-spacing:.700px;white-space:nowrap">键入命令</span></div>
<div id="status" class="abs">
<svg width="1079" height="32" style="position:absolute;left:0;top:0">
<defs><linearGradient id="mt" x1="0" y1="0" x2="0" y2="1"><stop offset="0" stop-color="#606060"/><stop offset="1" stop-color="#7c7c7c"/></linearGradient></defs>
<!-- layout tabs -->
<path d="M60 1.500h57l-6.500 17c-.8 2-1.500 2.500-3.500 2.500h-36c-2 0-2.700-.5-3.500-2.500z" fill="#4c4c4c"/>
<path d="M119 1.500h58l-6.500 17c-.8 2-1.500 2.500-3.500 2.500h-37c-2 0-2.700-.5-3.500-2.500z" fill="#4c4c4c"/>
<path d="M181 1.500h24l-6.500 17c-.8 2-1.500 2.500-3.500 2.500h-13c-2 0-3-1-2.300-3z" fill="#4c4c4c"/>
<path d="M9 1.500h52.500l-6.500 17c-.8 2-1.500 2.500-3.500 2.500h-32c-2 0-2.700-.5-3.500-2.500z" fill="url(#mt)"/>
<path d="M186.500 12.500h9M191 8v9" stroke="#c8c8c8" stroke-width="1.800"/>
<!-- tray -->
<rect x="511" y="2" width="568" height="28" fill="#4b4b4b"/>
<g stroke="#333" stroke-width="1"><path d="M511.500 2v28M542.500 2v28M611.500 2v28M721.500 2v28M790.500 2v28M902.500 2v28M945.500 2v28M973.500 2v28M1000.500 2v28M1029.500 2v28M1033.500 2v28"/></g>
<g stroke="#6a6a6a" stroke-width="1"><path d="M543.500 2v28M612.500 2v28M722.500 2v28M791.500 2v28M903.500 2v28M946.500 2v28M974.500 2v28M1001.500 2v28M1034.500 2v28"/></g>
<!-- grid -->
<path d="M550.500 8v15M553.500 8v15M556.500 8v15M559.500 8v15M562.500 8v15M548 10.500h17M548 13.500h17M548 16.500h17M548 19.500h17" stroke="#9a9a9a" stroke-width="1"/>
<!-- snap dots -->
<path d="M575 9.500h15M575 12.500h15M575 15.500h15M575 18.500h15M575 21.500h15" stroke="#888" stroke-width="1.200" stroke-dasharray="1.200 1.800"/>
<path d="M598.500 13.500h7l-3.500 4z" fill="#f0f0f0"/>
<!-- ortho -->
<path d="M619.500 8v14.500h14" fill="none" stroke="#bdbdbd" stroke-width="1.500"/><path d="M619.500 17.500h5v5" fill="none" stroke="#bdbdbd" stroke-width="1"/>
<!-- polar -->
<circle cx="650" cy="15.500" r="6.500" fill="none" stroke="#bdbdbd" stroke-width="1.500"/><path d="M650 15.500h9M650 15.500l6-6" stroke="#bdbdbd" stroke-width="1.300"/>
<path d="M668 13.500h7l-3.500 4z" fill="#f0f0f0"/>
<!-- isodraft -->
<path d="M685 8l16 15M693 7v10M693 17l-7 6" stroke="#b0b0b0" stroke-width="1.400" fill="none"/>
<path d="M708.500 13.500h7l-3.500 4z" fill="#f0f0f0"/>
<!-- otrack blue -->
<path d="M726 22.500h17M727 22l12-12" stroke="#3f86e0" stroke-width="1.600" fill="none"/><path d="M733 22.500c0-2.500-1-4-2.500-5" stroke="#3f86e0" stroke-width="1.200" fill="none"/>
<!-- osnap blue -->
<rect x="754.500" y="9.500" width="13" height="13" rx="1.500" fill="none" stroke="#3f86e0" stroke-width="1.700"/><rect x="752" y="7" width="5" height="5" fill="#111"/>
<path d="M776.500 13.500h7l-3.500 4z" fill="#f0f0f0"/>
<!-- anno icons -->
<path d="M804.500 8l-1.500 8-6 7 4 .5 4-5 4 5 4-.5-6-7 2-3z" fill="#3f86e0"/><path d="M806 8l5 2-3 3" fill="none" stroke="#3f86e0" stroke-width="1.600"/>
<path d="M829 8l-1.500 8-6 7 4 .5 4-5 4 5 4-.5-6-7z" fill="#c4c4c4"/><path d="M832 9l4 3-3 2" fill="none" stroke="#c4c4c4" stroke-width="1.300"/>
<path d="M853.500 7l-1.500 9-6 7 4 .5 4-5 4 5 4-.5-6-7z" fill="#c4c4c4"/>
<path d="M889.500 13.500h7l-3.500 4z" fill="#f0f0f0"/>
<!-- gear -->
<g transform="translate(916.500 15.500)"><circle r="3.800" fill="none" stroke="#c4c4c4" stroke-width="3"/><g stroke="#c4c4c4" stroke-width="2.200"><path d="M0 -6.500v13M-6.500 0h13M-4.600 -4.600l9.200 9.200M4.600 -4.600l-9.200 9.200"/></g><circle r="1.900" fill="#4b4b4b"/></g>
<path d="M933.500 13.500h7l-3.500 4z" fill="#f0f0f0"/>
<!-- plus -->
<path d="M951 15.500h15M958.500 8v15" stroke="#e0e0e0" stroke-width="1.600"/>
<!-- shapes -->
<rect x="978.500" y="7.500" width="6" height="6" fill="none" stroke="#c8c8c8" stroke-width="1.300"/><circle cx="990.500" cy="13.500" r="3.300" fill="none" stroke="#c8c8c8" stroke-width="1.300"/><path d="M983.500 17l3.500 6h-7z" fill="none" stroke="#c8c8c8" stroke-width="1.300"/>
<!-- blue circle -->
<rect x="1003" y="4" width="23" height="24" fill="#3d4654"/>
<circle cx="1014.500" cy="15.500" r="8.200" fill="#1c5fb8" stroke="#3f86e0" stroke-width="1.300"/><path d="M1011 19l7-6" stroke="#6aa6ee" stroke-width="1.300"/>
<!-- fullscreen -->
<rect x="1039.500" y="9.500" width="17" height="12" fill="none" stroke="#d8d8d8" stroke-width="1.300"/><path d="M1049 15l5-4M1054 14.500v-3.500h-3.500" stroke="#e8e8e8" stroke-width="1.400" fill="none"/><path d="M1042 19.500h4v-4z" fill="#e8e8e8"/>
<!-- hamburger -->
<path d="M1066 10.500h13M1066 15.500h13M1066 20.500h13" stroke="#e0e0e0" stroke-width="1.700"/>
<rect x="1046" y="26" width="33" height="6" fill="#c8c8c8"/>
</svg>
<span class="abs" style="left:22px;top:6px;font-size:12.500px;line-height:15px;font-weight:bold;color:#fff;white-space:nowrap">模型</span>
<span class="abs" style="left:72px;top:6px;font-size:12.500px;line-height:15px;color:#b8b8b8;white-space:nowrap">布局1</span>
<span class="abs" style="left:130px;top:6px;font-size:12.500px;line-height:15px;color:#b8b8b8;white-space:nowrap">布局2</span>
<span class="abs" style="left:515.500px;top:8px;font-size:12.500px;line-height:15px;font-weight:bold;color:#f4f4f4;white-space:nowrap">模型</span>
<span class="abs" style="left:871px;top:8px;font-size:12px;line-height:15px;font-weight:bold;color:#f0f0f0;white-space:nowrap;letter-spacing:-1px">1:1</span>
</div>
</body>
</html>
